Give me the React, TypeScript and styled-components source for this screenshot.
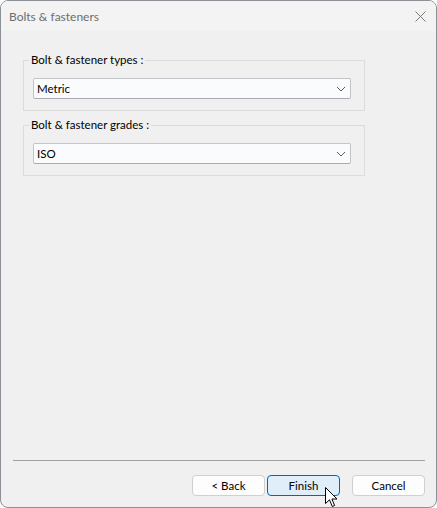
import React from "react";
import styled, { createGlobalStyle } from "styled-components";

const Global = createGlobalStyle`
  html, body { margin: 0; padding: 0; background: #ffffff; }
  body { font-family: "Segoe UI", Lato, "Noto Sans", sans-serif; font-size: 11.5px; }
  * { box-sizing: border-box; }
`;

const Window = styled.div`
  width: 437px;
  height: 508px;
  border: 1px solid #8d9096;
  border-radius: 8px;
  overflow: hidden;
  display: flex;
  flex-direction: column;
  background: #f0f0f0;
  position: relative;
`;

const TitleBar = styled.div`
  height: 30px;
  flex: none;
  display: flex;
  align-items: center;
  justify-content: space-between;
  padding: 0 9px 0 8px;
  background: #f3f3f3;
  color: #6e6e6e;
  font-size: 12px;
`;

const CloseButton = styled.div`
  width: 14px;
  height: 14px;
  display: flex;
  align-items: center;
  justify-content: center;
  margin-top: 1px;
`;

const Body = styled.div`
  flex: 1;
  display: flex;
  flex-direction: column;
  gap: 6px;
  padding: 21px 71px 0 22px;
`;

const Group = styled.fieldset`
  margin: 0;
  border: 1px solid #dcdcdc;
  padding: 10px 13px 11px 9px;
  min-width: 0;
`;

const Caption = styled.legend`
  padding: 0 2px;
  margin-left: -4px;
  color: #000;
  font-size: 11.5px;
  line-height: 16px;
`;

const Combo = styled.div`
  height: 21px;
  border: 1px solid #c2c6cb;
  border-bottom-color: #a9adb2;
  border-radius: 2px;
  background: #fafbfd;
  display: flex;
  align-items: center;
  justify-content: space-between;
  padding: 0 4px 0 3px;
  color: #000;
  font-size: 11.5px;
`;

const Footer = styled.div`
  flex: none;
  padding: 0 11px 11px 11px;
  display: flex;
  flex-direction: column;
`;

const Separator = styled.div`
  height: 1px;
  background: #a0a0a0;
  margin: 0 0 14px 1px;
`;

const ButtonRow = styled.div`
  display: flex;
  justify-content: flex-end;
  gap: 2px;
`;

const Button = styled.div<{ $primary?: boolean; $gapBefore?: boolean }>`
  width: 73px;
  height: 21px;
  display: flex;
  align-items: center;
  justify-content: center;
  border-radius: 4px;
  font-size: 11.5px;
  color: #000;
  background: ${(p) => (p.$primary ? "#e0eef9" : "#fdfdfd")};
  border: 1px solid ${(p) => (p.$primary ? "#0067c0" : "#d0d0d0")};
  margin-left: ${(p) => (p.$gapBefore ? "10px" : "0")};
`;

const Cursor = styled.svg`
  position: absolute;
  left: 324px;
  top: 486px;
  pointer-events: none;
`;

const Chevron = () => (
  <svg width="10" height="6" viewBox="0 0 10 6">
    <path d="M1 1 L5 5 L9 1" fill="none" stroke="#5f5f5f" strokeWidth="1" />
  </svg>
);

export default function App() {
  return (
    <>
      <Global />
      <Window>
        <TitleBar>
          <span>Bolts &amp; fasteners</span>
          <CloseButton>
            <svg width="11" height="11" viewBox="0 0 11 11">
              <path d="M0.5 0.5 L10.5 10.5 M10.5 0.5 L0.5 10.5" stroke="#7a7a7a" strokeWidth="1" />
            </svg>
          </CloseButton>
        </TitleBar>
        <Body>
          <Group>
            <Caption>Bolt &amp; fastener types :</Caption>
            <Combo>
              <span>Metric</span>
              <Chevron />
            </Combo>
          </Group>
          <Group>
            <Caption>Bolt &amp; fastener grades :</Caption>
            <Combo>
              <span>ISO</span>
              <Chevron />
            </Combo>
          </Group>
        </Body>
        <Footer>
          <Separator />
          <ButtonRow>
            <Button>&lt; Back</Button>
            <Button $primary>Finish</Button>
            <Button $gapBefore>Cancel</Button>
          </ButtonRow>
        </Footer>
        <Cursor width="14" height="21" viewBox="0 0 14 21">
          <path
            d="M0.5 0.5 L0.5 16.5 L4.5 12.8 L7.3 19.5 L9.6 18.5 L6.9 12 L12 12 Z"
            fill="#ffffff"
            stroke="#000000"
            strokeWidth="1"
            strokeLinejoin="round"
          />
        </Cursor>
      </Window>
    </>
  );
}
